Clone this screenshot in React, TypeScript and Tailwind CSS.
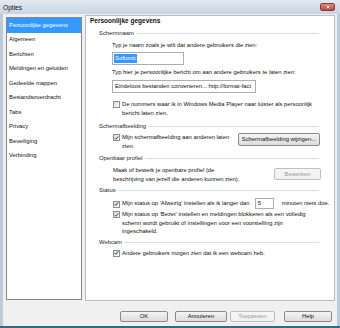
import React from "react";

const items = [
  "Persoonlijke gegevens",
  "Algemeen",
  "Berichten",
  "Meldingen en geluiden",
  "Gedeelde mappen",
  "Bestandsoverdracht",
  "Tabs",
  "Privacy",
  "Beveiliging",
  "Verbinding",
];

const Check = ({ checked }: { checked?: boolean }) => (
  <span className="mt-[1px] flex h-[7px] w-[7px] shrink-0 items-center justify-center border border-[#8e8f8f] bg-gradient-to-br from-[#d8d8d8] to-[#fbfbfb]">
    {checked && (
      <svg viewBox="0 0 7 7" className="h-[6px] w-[6px]">
        <path d="M1 3.6 L2.7 5.4 L6 1.2" stroke="#1d3f8c" strokeWidth="1.3" fill="none" />
      </svg>
    )}
  </span>
);

const Group = ({ label, className }: { label: string; className: string }) => (
  <div className={`ml-[13px] mr-[15px] flex items-center gap-[2px] ${className}`}>
    <span className="text-[#1e1e1e]">{label}</span>
    <div className="h-px flex-1 bg-[#d5dfe5]" />
  </div>
);

const Btn = ({ children, className, disabled }: { children: React.ReactNode; className: string; disabled?: boolean }) => (
  <div
    className={`flex items-center justify-center whitespace-nowrap rounded-[2px] border bg-gradient-to-b ${
      disabled
        ? "border-[#bcc0c3] from-[#f6f6f6] to-[#f0f0f0] text-[#9a9a9a]"
        : "border-[#8a8a8a] from-[#f4f4f4] to-[#dcdcdc] text-[#111]"
    } ${className}`}
  >
    {children}
  </div>
);

export default function App() {
  return (
    <div className="flex h-[328px] w-[340px] flex-col overflow-hidden bg-[#bccbd9] font-['Liberation_Sans',Arial,sans-serif] text-[5.85px] leading-[9px] text-[#111]">
      {/* title bar */}
      <div className="flex h-[14px] shrink-0 items-center justify-between bg-gradient-to-b from-[#e3eaf1] to-[#c8d5e2] pl-[3px] pr-[5px]">
        <span className="text-[6.6px] text-[#111]">Opties</span>
        <div className="flex h-[8px] w-[15px] items-center justify-center rounded-[2px] border border-[#8c3a34] bg-gradient-to-b from-[#e08a80] to-[#c2443a]">
          <svg viewBox="0 0 6 6" className="h-[4px] w-[4px]">
            <path d="M1 1 L5 5 M5 1 L1 5" stroke="#fff" strokeWidth="1.4" />
          </svg>
        </div>
      </div>

      {/* body */}
      <div className="mx-[3px] flex flex-1 flex-col bg-[#f0f0f0] pl-[3px]">
        <div className="flex gap-[3px]">
          {/* list */}
          <div className="mt-[3px] h-[283px] w-[76px] border border-[#828790] bg-white">
            {items.map((t, i) => (
              <div
                key={t}
                className={`flex h-[14.5px] items-center whitespace-nowrap pl-[2px] ${
                  i === 0 ? "bg-[#3399ff] text-white" : ""
                }`}
              >
                {t}
              </div>
            ))}
          </div>

          {/* panel */}
          <div className="mt-[1px] flex h-[286px] w-[250px] flex-col border border-[#b4bec8] bg-white">
            <div className="pl-[4px] text-[6.5px] font-bold">Persoonlijke gegevens</div>

            <Group label="Schermnaam" className="mt-[4px]" />
            <div className="ml-[26px] mt-[3px]">Typ je naam zoals je wilt dat andere gebruikers die zien:</div>
            <div className="ml-[26px] mt-[2px] flex h-[13px] w-[72px] items-center border border-[#abadb3] pl-[1px]">
              <span className="bg-[#3399ff] px-[1px] text-white">Softonic</span>
            </div>
            <div className="ml-[26px] mt-[3px]">
              Typ hier je persoonlijke bericht om aan andere gebruikers te laten zien:
            </div>
            <div className="ml-[26px] mt-[3px] flex h-[13px] w-[144px] items-center whitespace-nowrap border border-[#abadb3] pl-[2px]">
              Eindeloos bestanden converteren... http://format-fact
            </div>
            <div className="ml-[27px] mt-[7px] flex gap-[2px]">
              <Check />
              <span>
                De nummers waar ik in Windows Media Player naar luister als persoonlijk
                <br />
                bericht laten zien.
              </span>
            </div>

            <Group label="Schermafbeelding" className="mt-[4px]" />
            <div className="ml-[27px] mr-[14px] mt-[2px] flex items-start justify-between">
              <div className="flex gap-[2px]">
                <Check checked />
                <span>
                  Mijn schermafbeelding aan anderen laten
                  <br />
                  zien.
                </span>
              </div>
              <Btn className="h-[13px] w-[82px]">Schermafbeelding wijzigen...</Btn>
            </div>

            <Group label="Openbaar profiel" className="mt-[3px]" />
            <div className="ml-[27px] mr-[13px] mt-[3px] flex items-start justify-between">
              <span>
                Maak of bewerk je openbare profiel (de
                <br />
                beschrijving van jezelf die anderen kunnen zien).
              </span>
              <Btn disabled className="mt-[2px] h-[12px] w-[47px]">
                Bewerken
              </Btn>
            </div>

            <Group label="Status" className="mt-[2px]" />
            <div className="ml-[27px] mt-[3px] flex h-[11px] items-center whitespace-nowrap">
              <Check checked />
              <span className="ml-[2px]">Mijn status op 'Afwezig' instellen als ik langer dan</span>
              <div className="ml-[5px] flex h-[11px] w-[19px] items-center border border-[#abadb3] pl-[2px]">5</div>
              <span className="ml-[8px]">minuten niets doe.</span>
            </div>
            <div className="ml-[27px] mt-[1px] flex gap-[2px] leading-[8.5px]">
              <Check checked />
              <span>
                Mijn status op 'Bezet' instellen en meldingen blokkeren als een volledig
                <br />
                scherm wordt gebruikt of instellingen voor een voorstelling zijn
                <br />
                ingeschakeld.
              </span>
            </div>

            <Group label="Webcam" className="mt-[2px]" />
            <div className="ml-[27px] mt-[2px] flex gap-[2px]">
              <Check checked />
              <span>Andere gebruikers mogen zien dat ik een webcam heb.</span>
            </div>
          </div>
        </div>

        {/* buttons */}
        <div className="mt-[10px] flex h-[11px] justify-end pr-[5px]">
          <Btn className="h-[11px] w-[48px] border-[#3c7fb1]">OK</Btn>
          <Btn className="ml-[7px] h-[11px] w-[52px]">Annuleren</Btn>
          <Btn disabled className="ml-[3px] h-[11px] w-[45px]">
            Toepassen
          </Btn>
          <Btn className="ml-[9px] h-[11px] w-[48px]">Help</Btn>
        </div>
      </div>
      <div className="h-[2px] shrink-0 bg-[#2a6f7e]" />
    </div>
  );
}
